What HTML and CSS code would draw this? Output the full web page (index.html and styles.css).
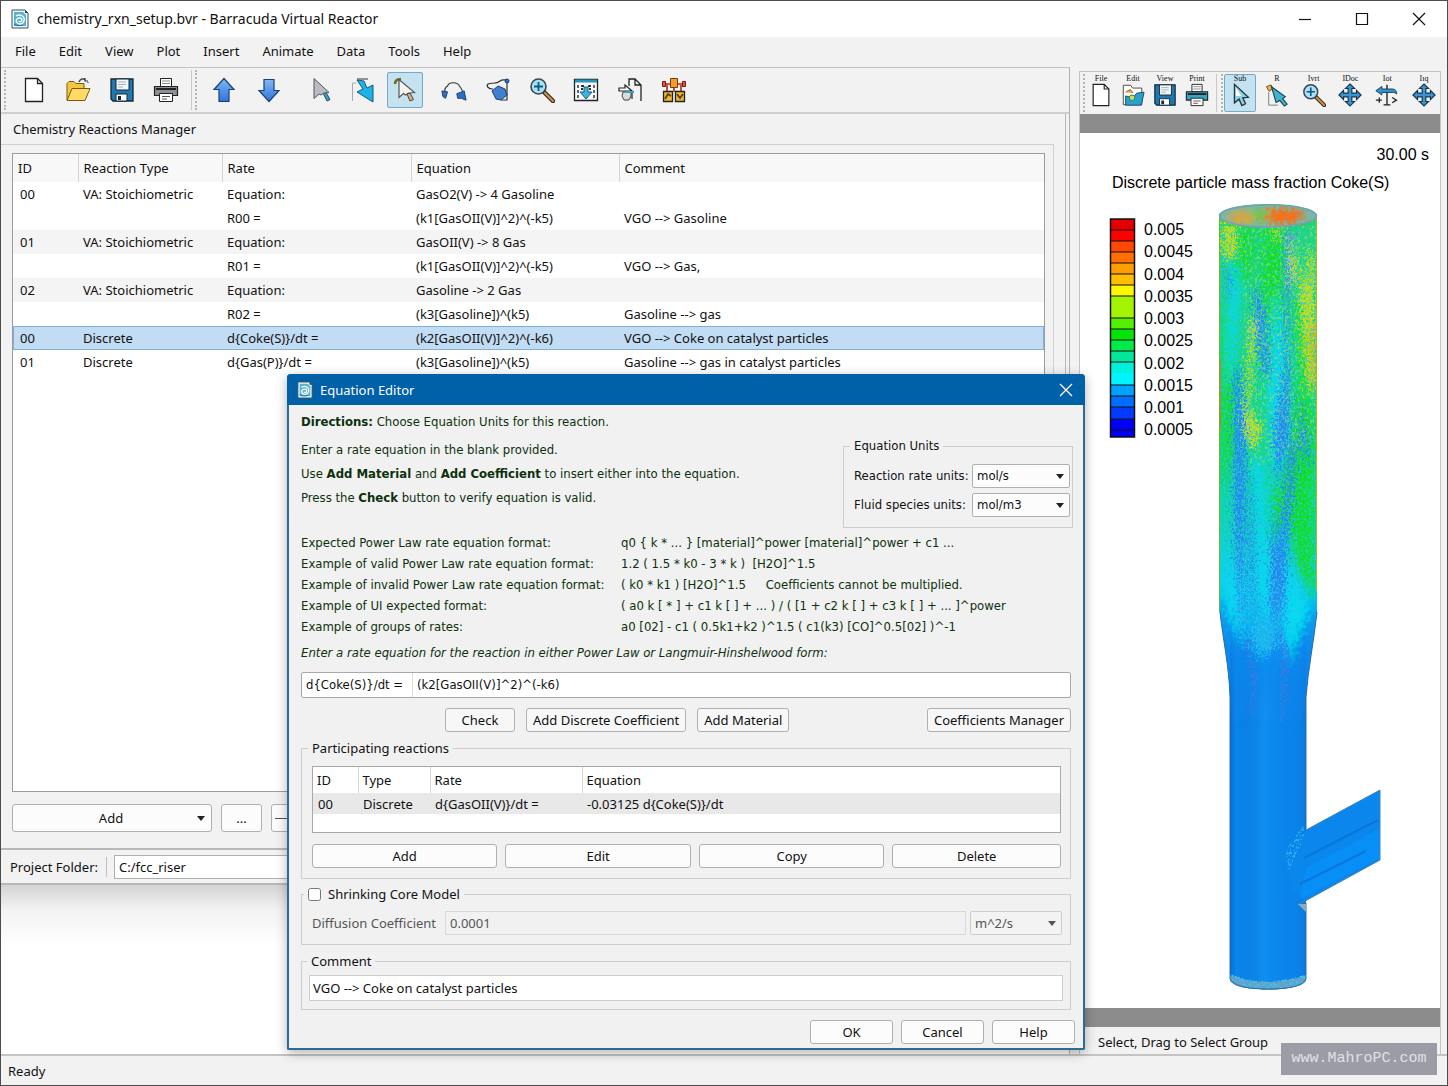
FILE: index.html
```html
<!DOCTYPE html>
<html lang="en">
<head>
<meta charset="utf-8">
<title>chemistry_rxn_setup.bvr - Barracuda Virtual Reactor</title>
<link rel="stylesheet" href="styles.css">
</head>
<body>
<svg class="defs" aria-hidden="true">
  <symbol id="i-app" viewBox="0 0 18 20">
    <path d="M1 1h13l3 3v15H1z" fill="#eef8fb" stroke="#34505e"/>
    <path d="M3 3h9l3 3v11H3z" fill="#57b4cf"/>
    <path d="M14 1v3h3z" fill="#1d4b63"/>
    <path d="M5 7c3-2 7-1 8 2s-1 6-4 6-5-3-3-5 5-1 5 1-3 2-3 1" fill="none" stroke="#fff" stroke-width="1.4"/>
    <path d="M3 15c2 2 6 2 9 1" fill="none" stroke="#1c6b95"/>
  </symbol>
  <symbol id="i-new" viewBox="0 0 26 26">
    <path d="M4.500 1.500h12l5 5v18h-17z" fill="#fff" stroke="#222" stroke-width="1.300"/>
    <path d="M16.500 1.500v5h5" fill="none" stroke="#222" stroke-width="1.300"/>
  </symbol>
  <symbol id="i-open" viewBox="0 0 26 26">
    <path d="M2 23V6.500l2-2h5l2 2h8V11" fill="#f6c544" stroke="#7a5a10"/>
    <path d="M2 23.500l5-12h18l-5 12z" fill="#ffdb63" stroke="#7a5a10"/>
    <path d="M14 5c1-3 4-4 6-2m0-2v3h3M23 6v-1" fill="none" stroke="#333" stroke-width="1.200"/>
  </symbol>
  <symbol id="i-save" viewBox="0 0 26 26">
    <path d="M2 2h22v22H4l-2-2z" fill="#1f78b0" stroke="#12283a" stroke-width="1.300"/>
    <path d="M7 2h13v11H7z" fill="#f4f7f9" stroke="#12283a"/>
    <path d="M9 5h8M9 7.500h8M9 10h5" stroke="#9fb1bd"/>
    <path d="M7 17h11v7H7z" fill="#fff" stroke="#12283a"/>
    <path d="M9 19h3v4H9z" fill="#12283a"/>
  </symbol>
  <symbol id="i-print" viewBox="0 0 26 26">
    <path d="M7.500 1.500h11v8h-11z" fill="#fff" stroke="#222"/>
    <path d="M9 4h8M9 6.500h8" stroke="#888"/>
    <path d="M1.500 9.500h23v9h-23z" fill="var(--body,#8d9096)" stroke="#222" stroke-width="1.200"/>
    <path d="M3 12h20" stroke="#222" stroke-width="2"/>
    <path d="M6.500 16.500h13v8h-13z" fill="#fff" stroke="#222"/>
    <path d="M9 19.500h8M9 22h5" stroke="#555"/>
  </symbol>
  <symbol id="i-up" viewBox="0 0 26 26">
    <path d="M13 1.500L23 12.500h-5V24.500H8V12.500H3z" fill="url(#g-blue)" stroke="#16407e" stroke-width="1.200"/>
  </symbol>
  <symbol id="i-down" viewBox="0 0 26 26">
    <path d="M13 24.500L23 13.500h-5V2.500H8v11H3z" fill="url(#g-blue)" stroke="#16407e" stroke-width="1.200"/>
  </symbol>
  <symbol id="i-pick" viewBox="0 0 26 26">
    <path d="M15 16l4 8 3-1.500-4-7z" fill="#31a3d4" stroke="#22485e"/>
    <path d="M6 1.500v20l5-4.500 2 1 3-2 5-.500z" fill="#b9bcc0" stroke="#555"/>
  </symbol>
  <symbol id="i-jump" viewBox="0 0 26 26">
    <path d="M2.500 24V6h4" fill="none" stroke="#aaa"/>
    <path d="M7 2h11" fill="none" stroke="#333"/>
    <path d="M7 3l7 1 3 7 6-3v17L7 15l6-3z" fill="#1db2e8" stroke="#17587d"/>
  </symbol>
  <symbol id="i-select" viewBox="0 0 26 26">
    <path d="M3 7c0-3 2-5 6-5" fill="none" stroke="#6d6a1c" stroke-width="2.500"/>
    <path d="M15 17l3 7 3.500-1.500L18 16z" fill="#cbb47d" stroke="#444"/>
    <path d="M7 2.500v18l4.500-4 2 1.500 3-2 6-.500z" fill="#f6f2ee" stroke="#555" stroke-width="1.200"/>
  </symbol>
  <symbol id="i-curve" viewBox="0 0 28 26">
    <path d="M4 15C4 9 7 9 7 9c1-5 11-5 13 0 2 3 3 3 4 8" fill="none" stroke="#333" stroke-width="1.200"/>
    <path d="M1 14l6 1-2 7-3-2z" fill="#2c6fc4" stroke="#173e78"/>
    <path d="M17 17l8-3 2 10-5-2-4 0z" fill="#2c6fc4" stroke="#173e78"/>
  </symbol>
  <symbol id="i-poly" viewBox="0 0 26 26">
    <path d="M8 12c-5 0-7-3-5-5 4-2 8 1 12-3 2-2 5-1 7-1v20h-6" fill="none" stroke="#333" stroke-width="1.200"/>
    <path d="M7 14l6-5 7 3 2 6-6 5-5-1z" fill="#3f81cc" stroke="#173e78"/>
    <circle cx="22" cy="4" r="2" fill="#2c6fc4" stroke="#173e78"/>
  </symbol>
  <symbol id="i-zoom" viewBox="0 0 26 26">
    <path d="M15 15l9 9" stroke="#3b2a12" stroke-width="4.500" stroke-linecap="round"/>
    <path d="M16 16l8 8" stroke="#c8935a" stroke-width="2.200" stroke-linecap="round"/>
    <circle cx="9.500" cy="9.500" r="7.500" fill="#a9e2f5" stroke="#3a4750" stroke-width="1.600"/>
    <path d="M9.500 5v9M5 9.500h9" stroke="#0b5b88" stroke-width="1.800"/>
  </symbol>
  <symbol id="i-grid" viewBox="0 0 26 26">
    <path d="M1.500 2.500h23v21h-23z" fill="#f6fbfd" stroke="#222" stroke-width="1.300"/>
    <path d="M2 4h22" stroke="#2b93c0" stroke-width="3"/>
    <path d="M5 8v14M21 8v14" stroke="#333" stroke-width="1.500" stroke-dasharray="3 2"/>
    <path d="M8 9h3M15 9h3M8 12h2M16 12h2" stroke="#333" stroke-width="2"/>
    <path d="M11 10h4v5h4l-6 7-6-7h4z" fill="#45b1d8" stroke="#1a6285"/>
  </symbol>
  <symbol id="i-export" viewBox="0 0 26 26">
    <path d="M12 9V2h6l6 6v16M18 2v6h6" fill="none" stroke="#222" stroke-width="1.300"/>
    <path d="M2 11h6V8l7 6H2zM8 20h6M15 16v6" fill="#fff" stroke="#222" stroke-width="1.200"/>
    <path d="M6 15h8v4l-2 4H7l-2-4z" fill="#d8dde0" stroke="#444"/>
    <path d="M9 15h8" stroke="#31a3c4" stroke-width="2"/>
  </symbol>
  <symbol id="i-network" viewBox="0 0 26 26">
    <path d="M3 7h20M13 11v4M6 14V8M20 14V8" stroke="#b02a18" stroke-width="1.600"/>
    <path d="M1.500 4.500h3v5h-3zM21.500 4.500h3v5h-3z" fill="#e2563c" stroke="#7a1c10"/>
    <path d="M9.500 1.500h7v9h-7z" fill="#f39b2d" stroke="#7a3a10"/>
    <path d="M2.500 14.500h9v10h-9zM14.500 14.500h9v10h-9z" fill="#f4b62c" stroke="#222" stroke-width="1.300"/>
    <path d="M4 22l3-5 3 2M16 17l3 4 3-4" fill="none" stroke="#4a4220" stroke-width="1.800"/>
  </symbol>
  <symbol id="i-image" viewBox="0 0 26 26">
    <path d="M2.500 2.500h8l2 3h10v18h-20z" fill="#fff" stroke="#444"/>
    <path d="M5 10l5-3 3 4" fill="#f2a23a" stroke="#a8531a"/>
    <path d="M5 24V14l8 2 4-5 8-1-3 14z" fill="#2aa0d0" stroke="#124a68"/>
    <circle cx="12" cy="16" r="3" fill="#bfe26b" stroke="#3d7a2a"/>
  </symbol>
  <symbol id="i-arrow" viewBox="0 0 26 26">
    <path d="M7 1.500v20l5-4 3 7 4-2-3-6.500 6-.500z" fill="#8fd3e2" stroke="#1d3440" stroke-width="1.400"/>
    <path d="M8.500 5v9l6 0z" fill="#fff"/>
  </symbol>
  <symbol id="i-arrow2" viewBox="0 0 26 26">
    <path d="M4 10v14h10" fill="none" stroke="#777"/>
    <path d="M1.500 4l5-2 2 4-4 3z" fill="#f2b052" stroke="#7a4a10"/>
    <path d="M7 4l15 11-3 2 5 6-3 2-5-6-4 2z" fill="#3fb4d0" stroke="#184656" stroke-width="1.200"/>
  </symbol>
  <symbol id="i-move" viewBox="0 0 26 26">
    <path d="M13 1l5 5h-3v5h5V8l5 5-5 5v-3h-5v5h3l-5 5-5-5h3v-5H6v3l-5-5 5-5v3h5V6H8z" fill="#3b93cf" stroke="#10304c" stroke-width="1.200"/>
  </symbol>
  <symbol id="i-rotate" viewBox="0 0 28 26">
    <path d="M14 1v24M10 24.500h8" stroke="#222" stroke-width="1.600"/>
    <path d="M1 8l7-5v3h12c4 0 6 3 5 6-1-2-3-2-5-2H8v3z" fill="#2f96d0" stroke="#10304c"/>
    <path d="M1 19h7M5 16v6M20 16l5 3-5 3" fill="none" stroke="#222" stroke-width="1.500"/>
  </symbol>
  <linearGradient id="g-blue" x1="0" y1="0" x2="0" y2="1">
    <stop offset="0" stop-color="#84b6f4"/><stop offset="1" stop-color="#2f74d8"/>
  </linearGradient>
</svg>

<header class="titlebar">
  <svg class="app-icon"><use href="#i-app"/></svg>
  <h1>chemistry_rxn_setup.bvr - Barracuda Virtual Reactor</h1>
  <div class="window-controls">
    <button aria-label="Minimize"><svg viewBox="0 0 14 14"><path d="M1 7.500h12"/></svg></button>
    <button aria-label="Maximize"><svg viewBox="0 0 14 14"><path d="M1.500 1.500h11v11h-11z"/></svg></button>
    <button aria-label="Close"><svg viewBox="0 0 14 14"><path d="M1 1l12 12M13 1L1 13"/></svg></button>
  </div>
</header>

<main class="desk">
  <nav class="menubar">
    <button>File</button><button>Edit</button><button>View</button><button>Plot</button><button>Insert</button><button>Animate</button><button>Data</button><button>Tools</button><button>Help</button>
  </nav>

  <section class="work">
    <div class="toolbar">
      <div class="tools tools-file">
        <button aria-label="New"><svg><use href="#i-new"/></svg></button>
        <button aria-label="Open"><svg><use href="#i-open"/></svg></button>
        <button aria-label="Save"><svg><use href="#i-save"/></svg></button>
        <button aria-label="Print"><svg><use href="#i-print"/></svg></button>
      </div>
      <div class="tools tools-order">
        <button aria-label="Move up"><svg><use href="#i-up"/></svg></button>
        <button aria-label="Move down"><svg><use href="#i-down"/></svg></button>
      </div>
      <div class="tools tools-pick">
        <button aria-label="Pick"><svg><use href="#i-pick"/></svg></button>
        <button aria-label="Jump"><svg><use href="#i-jump"/></svg></button>
        <button aria-label="Select" class="active"><svg><use href="#i-select"/></svg></button>
      </div>
      <div class="tools tools-draw">
        <button aria-label="Curve"><svg><use href="#i-curve"/></svg></button>
        <button aria-label="Polygon"><svg><use href="#i-poly"/></svg></button>
        <button aria-label="Zoom"><svg><use href="#i-zoom"/></svg></button>
        <button aria-label="Grid"><svg><use href="#i-grid"/></svg></button>
        <button aria-label="Export"><svg><use href="#i-export"/></svg></button>
        <button aria-label="Network"><svg><use href="#i-network"/></svg></button>
      </div>
    </div>

    <div class="manager">
      <h2>Chemistry Reactions Manager</h2>
      <div class="manager-body">
        <div class="table-frame">
          <table class="reactions">
            <colgroup><col class="c-id"><col class="c-type"><col class="c-rate"><col class="c-eq"><col></colgroup>
            <thead><tr><th>ID</th><th>Reaction Type</th><th>Rate</th><th>Equation</th><th>Comment</th></tr></thead>
            <tbody>
              <tr><td>00</td><td>VA: Stoichiometric</td><td>Equation:</td><td>GasO2(V) -&gt; 4 Gasoline</td><td></td></tr>
              <tr><td></td><td></td><td>R00 =</td><td>(k1[GasOII(V)]^2)^(-k5)</td><td>VGO --&gt; Gasoline</td></tr>
              <tr class="alt"><td>01</td><td>VA: Stoichiometric</td><td>Equation:</td><td>GasOII(V) -&gt; 8 Gas</td><td></td></tr>
              <tr><td></td><td></td><td>R01 =</td><td>(k1[GasOII(V)]^2)^(-k5)</td><td>VGO --&gt; Gas,</td></tr>
              <tr class="alt"><td>02</td><td>VA: Stoichiometric</td><td>Equation:</td><td>Gasoline -&gt; 2 Gas</td><td></td></tr>
              <tr><td></td><td></td><td>R02 =</td><td>(k3[Gasoline])^(k5)</td><td>Gasoline --&gt; gas</td></tr>
              <tr class="selected"><td>00</td><td>Discrete</td><td>d{Coke(S)}/dt =</td><td>(k2[GasOII(V)]^2)^(-k6)</td><td>VGO --&gt; Coke on catalyst particles</td></tr>
              <tr><td>01</td><td>Discrete</td><td>d{Gas(P)}/dt =</td><td>(k3[Gasoline])^(k5)</td><td>Gasoline --&gt; gas in catalyst particles</td></tr>
            </tbody>
          </table>
        </div>
        <div class="manager-actions">
          <button class="btn add-menu"><span>Add</span><i class="caret"></i></button>
          <button class="btn more">...</button>
          <button class="btn remove" aria-label="Remove"><i class="dash"></i></button>
        </div>
      </div>
    </div>

    <div class="project">
      <label for="folder">Project Folder:</label>
      <input id="folder" type="text" value="C:/fcc_riser">
    </div>
    <div class="backdrop"></div>
  </section>

  <section class="viewer">
    <div class="viewer-tools">
      <div class="mini mini-file">
        <button><small>File</small><svg><use href="#i-new"/></svg></button>
        <button><small>Edit</small><svg><use href="#i-image"/></svg></button>
        <button><small>View</small><svg><use href="#i-save"/></svg></button>
        <button class="blue"><small>Print</small><svg><use href="#i-print"/></svg></button>
      </div>
      <div class="mini mini-view">
        <button class="active"><small>Sub</small><svg><use href="#i-arrow"/></svg></button>
        <button><small>R</small><svg><use href="#i-arrow2"/></svg></button>
        <button><small>Ivrt</small><svg><use href="#i-zoom"/></svg></button>
        <button><small>IDoc</small><svg><use href="#i-move"/></svg></button>
        <button><small>Iot</small><svg><use href="#i-rotate"/></svg></button>
        <button><small>Iıq</small><svg><use href="#i-move"/></svg></button>
      </div>
    </div>
    <div class="band"></div>
    <div class="canvas">
      <svg class="plot" viewBox="1080 133 360 868" role="img" aria-label="Discrete particle mass fraction Coke(S)">
        <defs>
          <clipPath id="pipe">
            <path d="M1219 216C1219 200 1317 200 1317 216V612C1314 640 1308 670 1306 697V979C1306 993 1230 993 1230 979V697C1229 665 1223 640 1220 612z"/>
          </clipPath>
          <linearGradient id="base" gradientUnits="userSpaceOnUse" x1="0" y1="215" x2="0" y2="700">
            <stop offset="0" stop-color="#1cd870"/><stop offset=".45" stop-color="#10d880"/><stop offset=".62" stop-color="#08d8a8"/>
            <stop offset=".76" stop-color="#08cfe8"/><stop offset=".84" stop-color="#08b4f0"/><stop offset=".9" stop-color="#0a8cf0"/><stop offset="1" stop-color="#0a86ec"/>
          </linearGradient>
          <linearGradient id="shade" x1="0" x2="1" y1="0" y2="0">
            <stop offset="0" stop-color="#003c90" stop-opacity=".3"/><stop offset=".08" stop-color="#003c90" stop-opacity="0"/>
            <stop offset=".45" stop-color="#20a4ff" stop-opacity=".3"/><stop offset=".85" stop-color="#0a6ed8" stop-opacity=".1"/><stop offset="1" stop-color="#0b50b0" stop-opacity=".2"/>
          </linearGradient>
          <linearGradient id="fade" x1="0" x2="0" y1="0" y2="1">
            <stop offset="0" stop-color="#fff" stop-opacity="0"/><stop offset=".25" stop-color="#fff"/>
          </linearGradient>
          <mask id="fade-in"><rect x="1200" y="620" width="130" height="380" fill="url(#fade)"/></mask>
          <filter id="grain" x="-30%" y="-10%" width="160%" height="120%">
            <feGaussianBlur stdDeviation="1.500" result="b"/>
            <feTurbulence type="fractalNoise" baseFrequency=".45" numOctaves="2" seed="4" result="n"/>
            <feDisplacementMap in="b" in2="n" scale="30" xChannelSelector="R" yChannelSelector="G"/>
          </filter>
          <filter id="smear" x="-30%" y="-10%" width="160%" height="120%">
            <feGaussianBlur stdDeviation="4" result="b"/>
            <feTurbulence type="fractalNoise" baseFrequency=".25" numOctaves="2" seed="9" result="n"/>
            <feDisplacementMap in="b" in2="n" scale="18" xChannelSelector="R" yChannelSelector="G"/>
          </filter>
          <filter id="dots" x="0" y="0" width="100%" height="100%">
            <feTurbulence type="fractalNoise" baseFrequency=".5 .38" numOctaves="2" seed="21"/>
            <feColorMatrix values="0 0 0 0 0.04  0 0 0 0 0.55  0 0 0 0 0.85  0 8 0 0 -4"/>
            <feComposite in2="SourceGraphic" operator="in"/>
          </filter>
          <filter id="deep" x="0" y="0" width="100%" height="100%">
            <feTurbulence type="fractalNoise" baseFrequency=".5 .38" numOctaves="2" seed="12"/>
            <feColorMatrix values="0 0 0 0 0.04  0 0 0 0 0.2  0 0 0 0 0.8  0 9 0 0 -4.3"/>
            <feComposite in2="SourceGraphic" operator="in"/>
          </filter>
          <filter id="flecks" x="0" y="0" width="100%" height="100%">
            <feTurbulence type="fractalNoise" baseFrequency=".4 .3" numOctaves="2" seed="33"/>
            <feColorMatrix values="0 0 0 0 0.6  0 0 0 0 0.8  0 0 0 0 0.1  0 0 9 0 -5"/>
            <feComposite in2="SourceGraphic" operator="in"/>
          </filter>
        </defs>

        <text x="1429" y="160" text-anchor="end" class="plot-text">30.00 s</text>
        <text x="1112" y="188" class="plot-text">Discrete particle mass fraction Coke(S)</text>

        <g class="legend">
          <rect x="1111" y="219" width="24" height="11" fill="#e40000"/><rect x="1111" y="230" width="24" height="11" fill="#ff0000"/>
          <rect x="1111" y="241" width="24" height="11" fill="#ff4800"/><rect x="1111" y="252" width="24" height="11" fill="#ff7000"/>
          <rect x="1111" y="263" width="24" height="11" fill="#ff9c00"/><rect x="1111" y="274" width="24" height="11" fill="#ffbe00"/>
          <rect x="1111" y="285" width="24" height="11" fill="#fdf800"/><rect x="1111" y="296" width="24" height="22" fill="#a2f400"/>
          <rect x="1111" y="318" width="24" height="11" fill="#52f000"/><rect x="1111" y="329" width="24" height="11" fill="#04e408"/>
          <rect x="1111" y="340" width="24" height="11" fill="#00ec4a"/><rect x="1111" y="351" width="24" height="11" fill="#00e89c"/>
          <rect x="1111" y="362" width="24" height="11" fill="#00f0dc"/><rect x="1111" y="373" width="24" height="12" fill="#00f4ff"/>
          <rect x="1111" y="385" width="24" height="11" fill="#00a2ff"/><rect x="1111" y="396" width="24" height="11" fill="#006eff"/>
          <rect x="1111" y="407" width="24" height="12" fill="#003cff"/><rect x="1111" y="419" width="24" height="18" fill="#0000fa"/>
          <path d="M1111 230h24M1111 241h24M1111 252h24M1111 263h24M1111 274h24M1111 285h24M1111 296h24M1111 318h24M1111 329h24M1111 340h24M1111 351h24M1111 362h24M1111 385h24M1111 396h24M1111 407h24M1111 419h24M1111 430h24" stroke="#111" fill="none"/>
          <rect x="1110.500" y="219" width="24" height="218" fill="none" stroke="#111" stroke-width="1.500"/>
        </g>
        <g class="plot-label">
          <text x="1144" y="235">0.005</text><text x="1144" y="257">0.0045</text><text x="1144" y="280">0.004</text>
          <text x="1144" y="302">0.0035</text><text x="1144" y="324">0.003</text><text x="1144" y="346">0.0025</text>
          <text x="1144" y="369">0.002</text><text x="1144" y="391">0.0015</text><text x="1144" y="413">0.001</text><text x="1144" y="435">0.0005</text>
        </g>

        <g clip-path="url(#pipe)">
          <path d="M1215 200H1320V700H1306V1000H1230V700H1215z" fill="url(#base)"/>
          <g filter="url(#smear)">
            <path d="M1262 225l22 0 0 90-8 30-14-40zM1222 320l14 0-2 130-12 40zM1296 380l18 30 0 190-16-30-12-60zM1280 420l14 20-8 70-14 40zM1238 225l16 0-4 50-18 20zM1296 300l16 10 0 90-12-20z" fill="#10e020"/>
            <path d="M1230 250l10 40-4 60-8 40zM1276 290l10 60 0 90-10 50-8-90zM1252 460l10 0 8 140 0 60-12-80zM1224 540l16 60 0 40-16-30zM1284 560l26 50-20 60-12-60z" fill="#05dcf0"/>
          </g>
          <g filter="url(#grain)">
            <path d="M1254 280l10 30 6 60-6 10-8-50zM1234 375l6-10 6 90-4 190-8-120zM1286 230l8 0-6 80 2 120-12 60-4-60 10-60zM1298 390l10 50 2 30-10-30zM1250 460l4 60 2 140-6-90zM1292 440l6 0-10 100-6 110-6-90zM1272 500l6 60-2 130-6-90zM1226 265l5 10-3 30z" fill="#2288ee"/>
            <path d="M1250 320l6 0-6 70 0 60-6-30zM1222 225l14 0 2 30-14 5zM1290 230l8 40-8 20zM1308 250l6 0 2 130-6 20-4-30zM1250 410l12 18-8 22-8-12zM1300 270l10 20-8 80zM1272 228l10 0-4 14z" fill="#c4de12"/>
            <path d="M1310 330l6-10 1 70-5-10z" fill="#f0b018"/>
            <path d="M1252 620l24 0-4 30-16 10z" fill="#12b8ee"/>
          </g>
          <path d="M1215 226H1320V560L1290 650H1240L1215 560z" fill="#000" filter="url(#dots)" opacity=".65"/>
          <path d="M1240 226H1320V440L1250 470z" fill="#000" filter="url(#flecks)" opacity=".4"/>
          <path d="M1216 600l6 0 20 60 20 12 26-5 26-61 6 0-8 114h-84z" fill="#0a86ec" filter="url(#smear)" opacity=".7"/>
          <path d="M1244 640l6 0 8 36-4 44-4 0 0-40zM1280 630l10 20-1 30-5 42-4 0 0-40z" fill="#000" filter="url(#deep)"/>
          <rect x="1230" y="620" width="76" height="375" fill="url(#shade)" mask="url(#fade-in)"/>
          <path d="M1230 978q38 16 76 0v16h-76z" fill="#0a86ec"/>
          <path d="M1230 975q38 14 76 0v18h-76z" fill="#8fa9b8" opacity=".7"/>
          <path d="M1230 974q38 14 76 0v18h-76z" fill="#000" filter="url(#dots)"/>
          <ellipse cx="1268" cy="216" rx="48" ry="11" fill="#78b8a8"/>
          <g filter="url(#smear)"><ellipse cx="1242" cy="218" rx="14" ry="6" fill="#f4a020"/><ellipse cx="1282" cy="216" rx="22" ry="8" fill="#ff6a10"/><ellipse cx="1260" cy="215" rx="8" ry="6" fill="#4ccc40"/></g>
        </g>
        <ellipse cx="1268" cy="216" rx="48.500" ry="11" fill="none" stroke="#7f9cb4" stroke-width="1.500"/>
        <path d="M1219.500 218V612" stroke="#7cae30" fill="none"/>
        <path d="M1316.500 218V590" stroke="#b0b428" fill="none"/>
        <path d="M1220 360v70" stroke="#e8642c" fill="none"/>
        <path d="M1220 612C1223 640 1229 665 1230 697V979Q1235 989 1268 989Q1302 989 1306 979V903M1306 830V697C1308 670 1314 640 1317 612" stroke="#2a6ca8" fill="none"/>
        <path d="M1288 860L1306 830L1380 790V860L1306 901L1292 892z" fill="#0a86ec"/>
        <path d="M1306 868L1380 828L1380 858L1300 899z" fill="#0890fa" opacity=".8"/>
        <path d="M1304 858L1378 820M1300 884L1366 851" stroke="#0a6cc8" stroke-width="2" opacity=".6" fill="none"/>
        <path d="M1306 830L1380 790M1380 790v70M1297 905L1380 860" stroke="#3d84c0" fill="none"/>
        <path d="M1286 850l18-26v14l-16 34z" fill="#000" filter="url(#dots)" opacity=".7"/>
        <path d="M1298 904h8v8z" fill="#8fa9b8"/>
      </svg>
    </div>
    <div class="band"></div>
    <p class="hint">Select, Drag to Select Group</p>
  </section>

  <section class="dialog" role="dialog" aria-labelledby="dlg-title">
    <header>
      <svg class="app-icon"><use href="#i-app"/></svg>
      <h2 id="dlg-title">Equation Editor</h2>
      <button aria-label="Close dialog"><svg viewBox="0 0 14 14"><path d="M1 1l12 12M13 1L1 13"/></svg></button>
    </header>
    <div class="dialog-body">
      <div class="intro">
        <div class="directions">
          <p class="lead"><b>Directions:</b> Choose Equation Units for this reaction.</p>
          <p>Enter a rate equation in the blank provided.</p>
          <p>Use <b>Add Material</b> and <b>Add Coefficient</b> to insert either into the equation.</p>
          <p>Press the <b>Check</b> button to verify equation is valid.</p>
        </div>
        <fieldset class="units">
          <legend>Equation Units</legend>
          <label for="u-rate">Reaction rate units:</label>
          <span class="select"><select id="u-rate"><option>mol/s</option></select><i class="caret"></i></span>
          <label for="u-fluid">Fluid species units:</label>
          <span class="select"><select id="u-fluid"><option>mol/m3</option></select><i class="caret"></i></span>
        </fieldset>
      </div>
      <dl class="examples">
        <dt>Expected Power Law rate equation format:</dt><dd>q0 { k * ... } [material]^power [material]^power + c1 ...</dd>
        <dt>Example of valid Power Law rate equation format:</dt><dd>1.2 ( 1.5 * k0 - 3 * k )&nbsp; [H2O]^1.5</dd>
        <dt>Example of invalid Power Law rate equation format:</dt><dd>( k0 * k1 ) [H2O]^1.5 <span class="note">Coefficients cannot be multiplied.</span></dd>
        <dt>Example of UI expected format:</dt><dd>( a0 k [ * ] + c1 k [ ] + ... ) / ( [1 + c2 k [ ] + c3 k [ ] + ... ]^power</dd>
        <dt>Example of groups of rates:</dt><dd>a0 [02] - c1 ( 0.5k1+k2 )^1.5 ( c1(k3) [CO]^0.5[02] )^-1</dd>
      </dl>
      <p class="prompt">Enter a rate equation for the reaction in either Power Law or Langmuir-Hinshelwood form:</p>
      <div class="equation">
        <label for="eq">d{Coke(S)}/dt =</label>
        <input id="eq" type="text" value="(k2[GasOII(V)]^2)^(-k6)">
      </div>
      <div class="eq-actions">
        <button class="btn check">Check</button>
        <button class="btn">Add Discrete Coefficient</button>
        <button class="btn">Add Material</button>
        <button class="btn last">Coefficients Manager</button>
      </div>
      <fieldset class="parts">
        <legend>Participating reactions</legend>
        <div class="parts-frame">
          <table>
            <colgroup><col class="p-id"><col class="p-type"><col class="p-rate"><col></colgroup>
            <thead><tr><th>ID</th><th>Type</th><th>Rate</th><th>Equation</th></tr></thead>
            <tbody><tr><td>00</td><td>Discrete</td><td>d{GasOII(V)}/dt =</td><td>-0.03125 d{Coke(S)}/dt</td></tr></tbody>
          </table>
        </div>
        <div class="parts-actions">
          <button class="btn">Add</button><button class="btn">Edit</button><button class="btn">Copy</button><button class="btn">Delete</button>
        </div>
      </fieldset>
      <fieldset class="core">
        <legend><input type="checkbox" id="core"><label for="core">Shrinking Core Model</label></legend>
        <label for="diff">Diffusion Coefficient</label>
        <input id="diff" type="text" value="0.0001" disabled>
        <span class="select"><select aria-label="Diffusion units" disabled><option>m^2/s</option></select><i class="caret"></i></span>
      </fieldset>
      <fieldset class="comment">
        <legend>Comment</legend>
        <input type="text" aria-label="Comment" value="VGO --&gt; Coke on catalyst particles">
      </fieldset>
      <div class="dialog-actions">
        <button class="btn">OK</button><button class="btn">Cancel</button><button class="btn">Help</button>
      </div>
    </div>
  </section>
</main>

<footer class="statusbar">Ready</footer>
<div class="watermark">www.MahroPC.com</div>
</body>
</html>
```
FILE: styles.css
```css
* { box-sizing: border-box; }

body {
  margin: 0;
  min-height: 100vh;
  display: flex;
  flex-direction: column;
  position: relative;
  border: 1px solid #4c4c4c;
  background: #f2f2f2;
  color: #111;
  font: 13px/20px "Noto Sans", "Open Sans", sans-serif;
}

h1, h2, p, dl, dd, fieldset { margin: 0; }
h1, h2 { font-weight: 400; }
button, input, select { font: inherit; color: inherit; }
button { padding: 0; border: 0; background: none; }
.defs { position: absolute; width: 0; height: 0; }

/* Title bar */
.titlebar {
  display: flex;
  align-items: center;
  height: 36px;
  padding-left: 10px;
  background: #fff;
}
.titlebar h1 { font-size: 14px; margin-left: 8px; }
.app-icon { width: 18px; height: 20px; }
.window-controls { display: flex; margin-left: auto; }
.window-controls button { width: 57px; height: 36px; }
.window-controls svg { width: 14px; height: 14px; display: block; margin: auto; }
.window-controls path { fill: none; stroke: #111; stroke-width: 1.2; }

/* Main area */
.desk {
  flex: 1;
  display: grid;
  grid-template: 30px 1fr / minmax(0, 1fr) 377px;
}
.menubar {
  grid-column: 1 / -1;
  display: flex;
  gap: 23px;
  padding: 0 0 2px 14px;
}
.work {
  display: flex;
  flex-direction: column;
  border-top: 1px solid #c4c4c4;
  border-right: 1px solid #b0b0b0;
}
.toolbar {
  display: flex;
  height: 46px;
  align-items: center;
  border-bottom: 2px solid #cfcfcf;
}
.tools { display: flex; align-items: center; height: 40px; }
.tools button { height: 36px; border: 1px solid transparent; border-radius: 2px; }
.tools svg { display: block; width: 26px; height: 26px; margin: auto; }
.tools-file, .tools-order, .mini { border-left: 2px dotted #b4b4b4; }
.tools-file { margin-left: 3px; padding-left: 6px; width: 188px; border-right: 1px solid #c8c8c8; }
.tools-file button { width: 44px; }
.tools-order { margin-left: 3px; padding-left: 4px; }
.tools-order button { width: 45px; }
.tools-pick { margin-left: 9px; }
.tools-pick button { width: 36px; margin: 0 3px; }
.tools-draw { margin-left: 6px; }
.tools-draw button { width: 44px; }
.tools .active, .mini .active { background: #c5e2f1; border-color: #74a9c9; }

.manager {
  flex: 1;
  display: flex;
  flex-direction: column;
  margin-right: 3px;
  border-right: 1px solid #b8b8b8;
}
.manager h2 { font-size: 13px; line-height: 30px; padding-left: 12px; }
.manager-body {
  flex: 1;
  display: flex;
  flex-direction: column;
  margin-right: 11px;
  padding: 8px 8px 16px 11px;
  border: solid #d0d0d0;
  border-width: 1px 1px 0 0;
}
.table-frame { flex: 1; border: 1px solid #9c9c9c; background: #fff; }
table { width: 100%; border-collapse: collapse; table-layout: fixed; }
th, td { padding: 0 5px; text-align: left; font-weight: 400; white-space: nowrap; }
th { background: #f8f8f8; }
th + th { border-left: 1px solid #d4d4d4; }
.reactions th { height: 28px; }
.reactions td { height: 24px; }
.reactions td:first-child { padding-left: 7px; }
.c-id { width: 65px; }
.c-type { width: 144px; }
.c-rate { width: 189px; }
.c-eq { width: 208px; }
.alt { background: #f4f4f4; }
.selected { background: #c2dcf4; outline: 1px solid #7fb0d8; outline-offset: -1px; }

.btn {
  height: 24px;
  border: 1px solid #b0b0b0;
  border-radius: 3px;
  background: #fcfcfc;
  line-height: 20px;
}
.caret {
  width: 0;
  border: solid transparent;
  border-width: 5px 4px 0;
  border-top-color: #222;
}
.manager-actions { display: flex; gap: 9px; margin-top: 12px; }
.manager-actions .btn { height: 28px; }
.add-menu { display: flex; align-items: center; width: 200px; padding: 0 6px 0 12px; }
.add-menu span { flex: 1; }
.more { width: 41px; }
.remove { width: 41px; padding-left: 3px; }
.dash { display: block; width: 14px; height: 1px; background: #555; }

.project {
  display: flex;
  align-items: center;
  height: 37px;
  padding-left: 9px;
  border: solid #b8b8b8;
  border-width: 2px 0;
}
.project label { padding-right: 8px; border-right: 1px solid #c0c0c0; }
.project input { flex: 1; height: 24px; margin-left: 7px; padding: 0 4px; border: 1px solid #b0b0b0; background: #fff; }
.backdrop { height: 169px; background: linear-gradient(#d4d4d4, #f2f2f2 24px, #fff 60px); }

/* 3D viewer */
.viewer {
  display: flex;
  flex-direction: column;
  margin: 4px 6px 0 9px;
  border: solid #c4c4c4;
  border-width: 1px 1px 0;
}
.viewer-tools { display: flex; align-items: center; height: 42px; padding-left: 3px; }
.mini { display: flex; height: 38px; }
.mini button { display: flex; flex-direction: column; align-items: center; border: 1px solid transparent; border-radius: 2px; }
.mini small { font: 8px/8px "Liberation Serif", serif; }
.mini svg { width: 24px; height: 24px; }
.mini-file { width: 134px; border-right: 1px solid #c8c8c8; }
.mini-file button { width: 32px; }
.mini-file .blue { --body: #35a2c8; }
.mini-view { flex: 1; margin-left: 4px; padding-left: 1px; justify-content: space-between; }
.mini-view button { width: 32px; }
.band { height: 19px; background: #8c8c8c; }
.canvas { flex: 1; background: #fff; }
.plot { display: block; width: 100%; height: auto; }
.plot-text, .plot-label { font: 16px "Liberation Sans", Arial, sans-serif; }
.hint { height: 27px; padding-left: 18px; line-height: 31px; }

/* Equation editor window */
.dialog {
  position: absolute;
  left: 286px;
  top: 373px;
  width: 798px;
  border: 2px solid #2f6a94;
  border-top: 0;
  border-radius: 4px 4px 2px 2px;
  background: #f1f1f1;
  box-shadow: 0 3px 12px rgba(0, 0, 0, .3);
}
.dialog header {
  display: flex;
  align-items: center;
  height: 31px;
  margin: 0 -2px;
  padding: 0 11px 0 10px;
  border-radius: 4px 4px 0 0;
  background: #0060a8;
  color: #fff;
}
.dialog header .app-icon { width: 16px; height: 18px; }
.dialog header h2 { font-size: 13px; margin-left: 7px; }
.dialog header button { margin-left: auto; width: 16px; height: 16px; }
.dialog header button svg { display: block; width: 14px; height: 14px; margin: auto; }
.dialog header button path { fill: none; stroke: #fff; stroke-width: 1.3; }
.dialog-body { padding: 5px 12px 4px; }

fieldset { min-width: 0; padding: 0; border: 1px solid #cdcdcd; }
legend { height: 20px; padding: 0 4px; }

.intro, .examples, .prompt, .equation { font-family: "DejaVu Sans Condensed", "Noto Sans", sans-serif; }
.intro { display: flex; justify-content: space-between; align-items: flex-end; height: 118px; color: #0d300d; }
.directions { align-self: flex-start; line-height: 24px; white-space: nowrap; }
.directions .lead { margin-bottom: 4px; }
.units {
  display: grid;
  grid-template-columns: 1fr 98px;
  gap: 5px 0;
  align-items: center;
  width: 230px;
  height: 92px;
  margin-right: -2px;
  padding: 8px 2px 10px 10px;
  color: #111;
}
.units legend { margin-left: -4px; }
.select { position: relative; display: flex; }
.select select {
  appearance: none;
  width: 100%;
  height: 24px;
  padding: 0 4px;
  border: 1px solid #b0b0b0;
  border-radius: 2px;
  background: #fcfcfc;
  opacity: 1;
}
.select .caret { position: absolute; right: 6px; top: 10px; }

.examples {
  display: grid;
  grid-template-columns: 320px 1fr;
  margin-top: 4px;
  line-height: 21px;
  white-space: pre;
  color: #0d300d;
}
.note { margin-left: 16px; }
.prompt { margin-top: 5px; line-height: 22px; font-style: italic; color: #0d300d; }
.equation {
  display: flex;
  height: 26px;
  margin-top: 8px;
  border: 1px solid #a8a8a8;
  border-radius: 2px;
  background: #fff;
  line-height: 24px;
}
.equation label { width: 111px; padding-left: 4px; border-right: 1px solid #ddd; }
.equation input { flex: 1; padding: 0 4px; border: 0; background: none; }
.eq-actions { display: flex; gap: 11px; margin: 10px 0 6px 144px; }
.eq-actions .btn { padding: 0 6px; background: #f7f7f7; }
.eq-actions .check { width: 70px; }
.eq-actions .last { margin-left: auto; }

.parts { padding: 8px 9px 10px 10px; }
.parts legend { margin-left: -4px; }
.parts-frame { height: 67px; border: 1px solid #a8a8a8; background: #fff; }
.parts-frame th { height: 26px; padding: 0 4px; background: #fff; }
.parts-frame td { height: 21px; background: #e8e8e8; }
.p-id { width: 45px; }
.p-type { width: 72px; }
.p-rate { width: 152px; }
.parts-actions { display: grid; grid-template-columns: 11fr 11fr 11fr 10fr; gap: 8px; margin-top: 11px; }

.core {
  display: grid;
  grid-template-columns: 129px 1fr 92px;
  column-gap: 4px;
  align-items: center;
  margin-top: 5px;
  padding: 7px 8px 9px 10px;
  color: #555;
}
.core legend { display: flex; align-items: center; margin-left: -8px; color: #111; }
.core legend input { width: 13px; height: 13px; margin: 0 7px 0 0; }
#diff { width: 100%; min-width: 0; height: 24px; padding: 0 4px; border: 1px solid #d8d8d8; background: #f1f1f1; }
.core select { border-color: #cdcdcd; background: #f3f3f3; }
.core .caret { border-top-color: #555; }

.comment { margin-top: 6px; padding: 4px 7px 8px; }
.comment legend { margin-left: -2px; }
.comment input { display: block; width: 100%; height: 26px; padding: 0 3px; border: 1px solid #cdcdcd; background: #fff; }
.dialog-actions { display: flex; justify-content: flex-end; gap: 8px; margin: 10px -4px 0 0; }
.dialog-actions .btn { width: 83px; }

/* Footer */
.statusbar { height: 31px; padding-left: 7px; border-top: 2px solid #c4c4c4; line-height: 30px; }
.watermark {
  position: absolute;
  right: 10px;
  bottom: 10px;
  width: 156px;
  background: #9c9ca6;
  color: #e0e0e6;
  font: 15px/32px "Liberation Mono", monospace;
  text-align: center;
}
```
